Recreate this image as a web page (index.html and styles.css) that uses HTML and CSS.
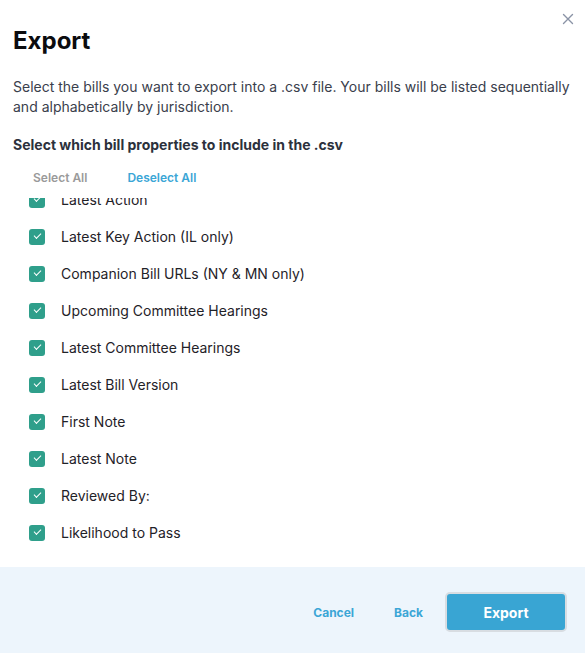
FILE: index.html
```html
<!DOCTYPE html>
<html>
<head>
<meta charset="utf-8">
<link rel="stylesheet" href="styles.css">
</head>
<body>
<div class="modal">
  <button class="close" aria-label="Close">
    <svg width="12" height="12" viewBox="0 0 12 12"><path d="M1.5 1.5L10.5 10.5M10.5 1.5L1.5 10.5" stroke="#8a93a6" stroke-width="1.4" stroke-linecap="round"/></svg>
  </button>
  <div class="content">
    <h1 class="title">Export</h1>
    <p class="desc">Select the bills you want to export into a .csv file. Your bills will be listed sequentially and alphabetically by jurisdiction.</p>
    <h2 class="subhead">Select which bill properties to include in the .csv</h2>
    <div class="toggles">
      <span class="toggle muted">Select All</span>
      <span class="toggle active">Deselect All</span>
    </div>
  </div>
  <div class="list" id="list">
    <div class="item"><span class="cb"></span><span>Bill Number</span></div>
    <div class="item"><span class="cb"></span><span>Title</span></div>
    <div class="item"><span class="cb"></span><span>Status</span></div>
    <div class="item"><span class="cb"></span><span>Latest Action</span></div>
    <div class="item"><span class="cb"></span><span>Latest Key Action (IL only)</span></div>
    <div class="item"><span class="cb"></span><span>Companion Bill URLs (NY &amp; MN only)</span></div>
    <div class="item"><span class="cb"></span><span>Upcoming Committee Hearings</span></div>
    <div class="item"><span class="cb"></span><span>Latest Committee Hearings</span></div>
    <div class="item"><span class="cb"></span><span>Latest Bill Version</span></div>
    <div class="item"><span class="cb"></span><span>First Note</span></div>
    <div class="item"><span class="cb"></span><span>Latest Note</span></div>
    <div class="item"><span class="cb"></span><span>Reviewed By:</span></div>
    <div class="item"><span class="cb"></span><span>Likelihood to Pass</span></div>
  </div>
  <div class="footer">
    <span class="link">Cancel</span>
    <span class="link back">Back</span>
    <span class="primary">Export</span>
  </div>
</div>
<script>
  var l = document.getElementById('list');
  l.scrollTop = l.scrollHeight;
</script>
</body>
</html>
```

FILE: styles.css
```css
* { box-sizing: border-box; }
html, body { margin: 0; padding: 0; background: #fff; }
body { font-family: Inter, "Noto Sans", sans-serif; }
.modal {
  position: relative;
  width: 585px;
  height: 653px;
  display: flex;
  flex-direction: column;
  background: #fff;
}
.close {
  position: absolute;
  top: 13px;
  right: 11px;
  width: 12px;
  height: 12px;
  padding: 0;
  border: 0;
  background: none;
  display: flex;
}
.content { padding: 26px 13px 0 13px; }
.title {
  margin: 0;
  font-size: 24px;
  line-height: 30px;
  font-weight: 700;
  color: #0b0c0f;
}
.desc {
  margin: 21px 0 0 0;
  font-size: 14px;
  line-height: 20px;
  color: #3a404c;
}
.subhead {
  margin: 18px 0 0 0;
  font-size: 14px;
  line-height: 20px;
  font-weight: 700;
  color: #2c313c;
}
.toggles {
  display: flex;
  gap: 40px;
  margin-top: 15px;
  padding-left: 20px;
  font-size: 12px;
  line-height: 16px;
  font-weight: 600;
}
.toggle.muted { color: #9a9a9a; }
.toggle.active { color: #3ba6d6; }
.list {
  margin-top: 12px;
  height: 369px;
  overflow-y: auto;
  scrollbar-width: none;
  padding: 0 0 16px 29px;
}
.list::-webkit-scrollbar { display: none; }
.item {
  height: 37px;
  display: flex;
  align-items: center;
  gap: 16px;
  font-size: 14px;
  color: #1f2228;
}
.cb {
  width: 16px;
  height: 16px;
  border-radius: 3px;
  background: #2f9f8b;
  position: relative;
  flex: none;
}
.cb::after {
  content: "";
  position: absolute;
  left: 5px;
  top: 4px;
  width: 6px;
  height: 3px;
  border-left: 1.6px solid #fff;
  border-bottom: 1.6px solid #fff;
  transform: rotate(-45deg);
}
.footer {
  flex: 1;
  background: #edf5fc;
  display: flex;
  align-items: center;
  justify-content: flex-end;
  padding: 4px 18px 0 0;
}
.link {
  font-size: 12px;
  font-weight: 700;
  color: #3ba6d6;
  margin-right: 40px;
}
.link.back { margin-right: 22px; }
.primary {
  width: 122px;
  height: 40px;
  display: flex;
  align-items: center;
  justify-content: center;
  background: #39a5d3;
  border: 2px solid #d8dde2;
  border-radius: 5px;
  color: #fff;
  font-size: 14px;
  font-weight: 700;
}
```
